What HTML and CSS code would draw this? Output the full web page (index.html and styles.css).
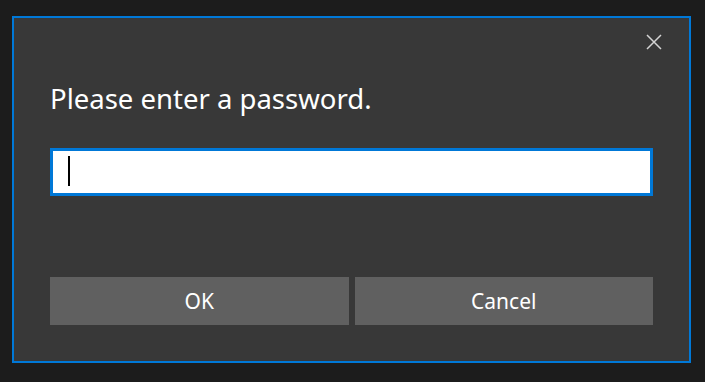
FILE: index.html
```html
<!DOCTYPE html>
<html lang="en">
<head>
<meta charset="utf-8">
<title>Password</title>
<link rel="stylesheet" href="styles.css">
</head>
<body>
<div class="dialog">
  <div class="header">
    <button class="close" aria-label="Close">
      <svg width="16" height="16" viewBox="0 0 16 16"><path d="M1 1 L15 15 M15 1 L1 15" stroke="#d4d4d4" stroke-width="1.5" fill="none"/></svg>
    </button>
  </div>
  <div class="title">Please enter a password.</div>
  <div class="field"><span class="caret"></span></div>
  <div class="buttons">
    <button class="btn">OK</button>
    <button class="btn">Cancel</button>
  </div>
</div>
</body>
</html>
```
FILE: styles.css
```css
html, body {
  margin: 0;
  padding: 0;
  background: #1c1c1c;
  height: 100%;
}
body {
  padding: 16px 0 0 12px;
  box-sizing: border-box;
  font-family: "Noto Sans", "Open Sans", sans-serif;
}
.dialog {
  box-sizing: border-box;
  width: 679px;
  height: 347px;
  border: 2px solid #0078d7;
  background: #383838;
  padding: 0 36px;
  display: flex;
  flex-direction: column;
}
.header {
  display: flex;
  justify-content: flex-end;
  margin-right: -9px;
  padding-top: 16px;
  height: 16px;
}
.close {
  background: none;
  border: 0;
  padding: 0;
  width: 16px;
  height: 16px;
  display: block;
}
.close svg { display: block; }
.title {
  color: #ffffff;
  font-size: 27.5px;
  line-height: 36px;
  margin-top: 31px;
  white-space: nowrap;
}
.field {
  box-sizing: border-box;
  height: 48px;
  margin-top: 31px;
  border: 3px solid #0078d7;
  background: #ffffff;
  padding: 5px 0 0 15px;
}
.caret {
  display: block;
  width: 2px;
  height: 30px;
  background: #000000;
}
.buttons {
  margin-top: auto;
  margin-bottom: 36px;
  display: grid;
  grid-template-columns: 1fr 1fr;
  gap: 6px;
}
.btn {
  height: 48px;
  border: 0;
  background: #606060;
  color: #ffffff;
  font-family: "Noto Sans", "Open Sans", sans-serif;
  font-size: 21px;
  padding: 0;
}
```
